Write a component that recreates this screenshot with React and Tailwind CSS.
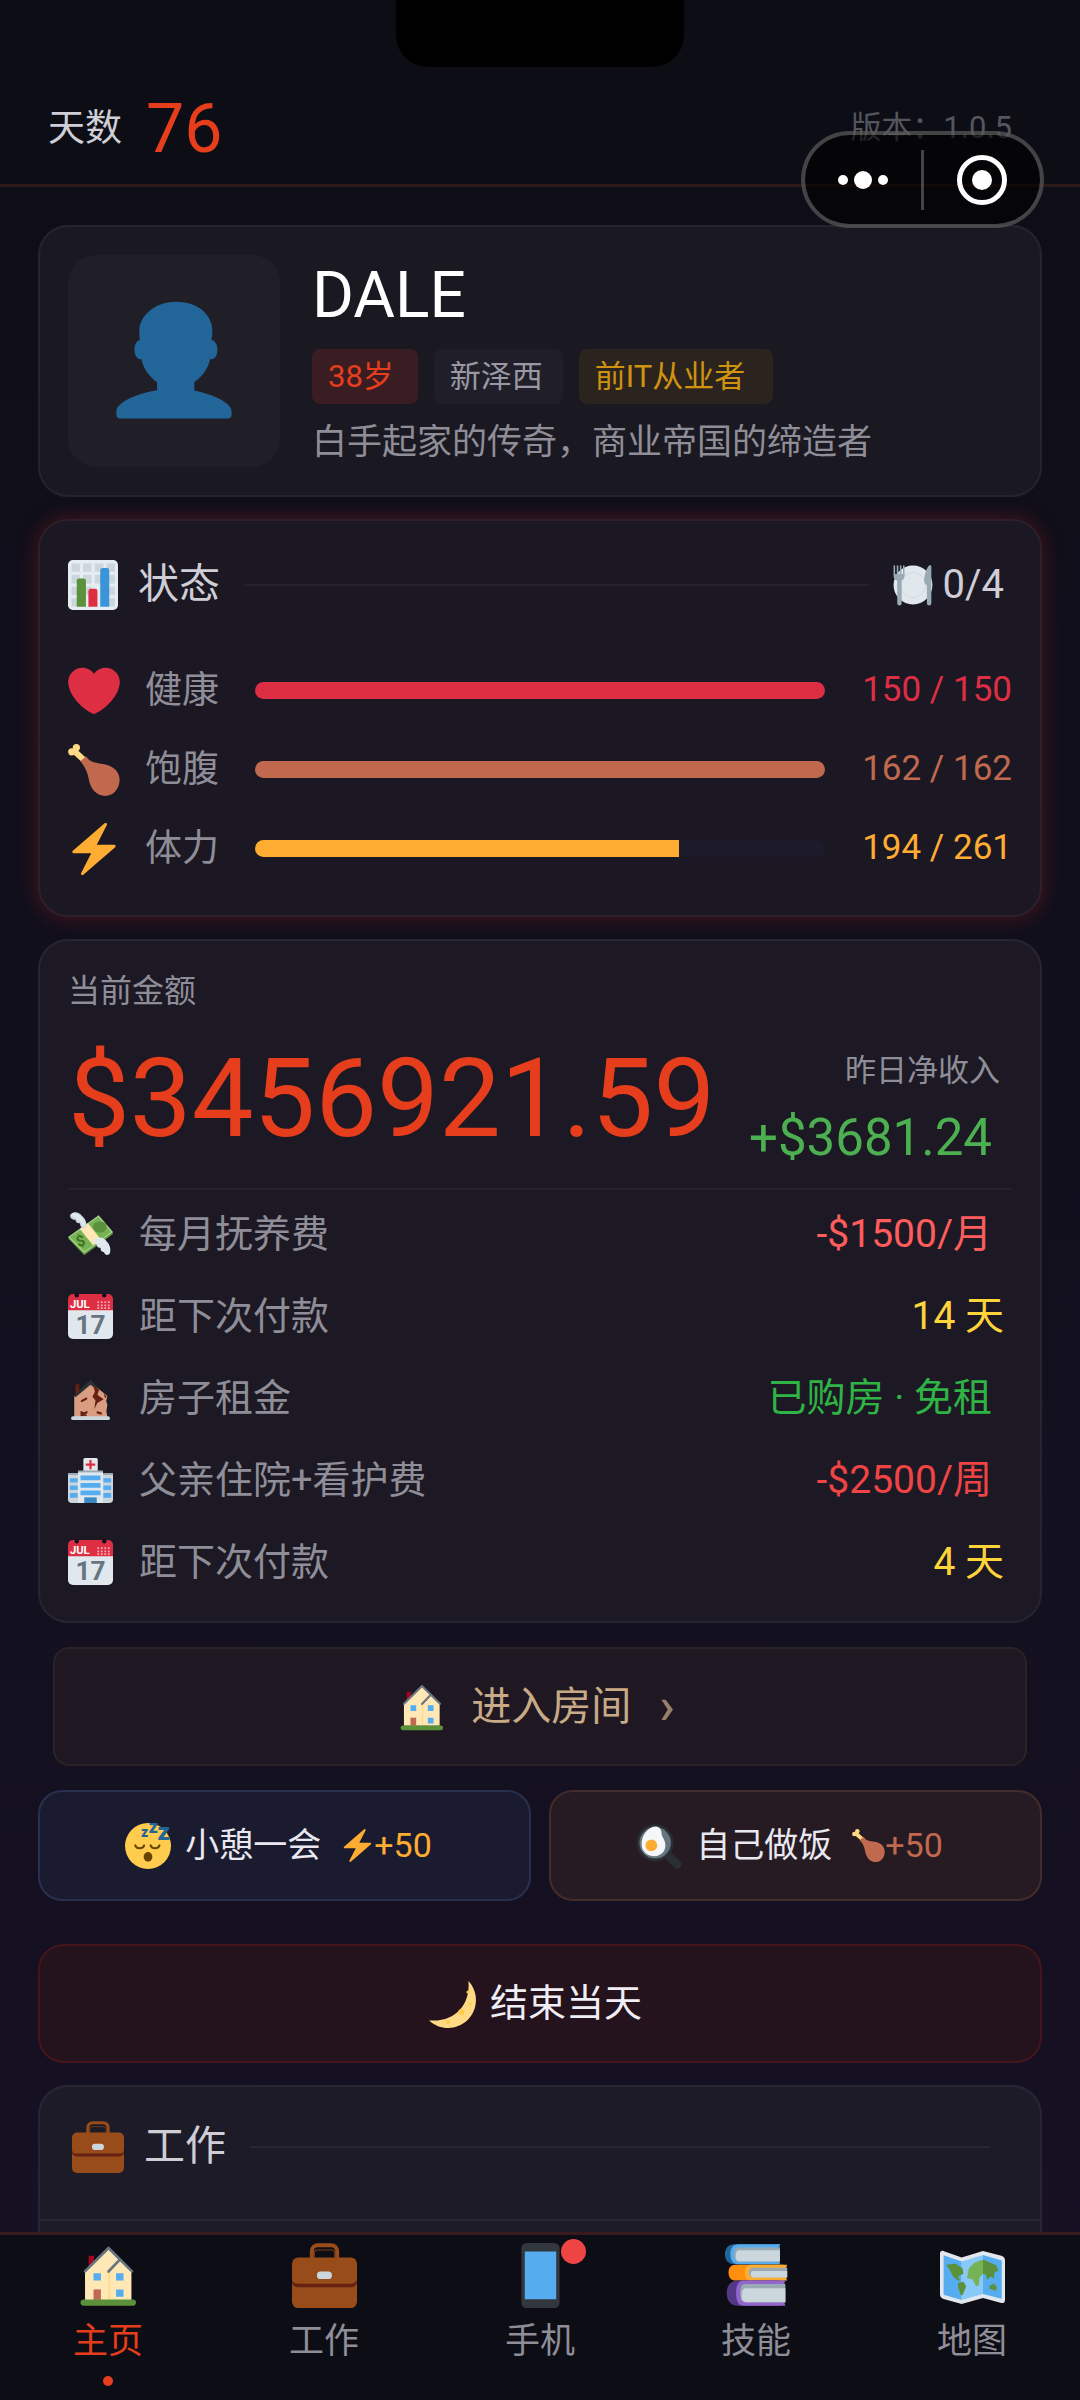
import React, { useState } from 'react';

/* ---------- Emoji icons ---------- */

const Svg = ({ className, children }) => (
  <svg viewBox="0 0 36 36" className={`shrink-0 overflow-visible ${className}`} aria-hidden="true">
    {children}
  </svg>
);

const BustIcon = ({ className }) => (
  <Svg className={className}>
    <path fill="#226699" d="M24 26.799v-2.566c2-1.348 4.08-3.779 4.703-6.896.186.103.206.17.413.17.991 0 1.709-1.287 1.709-2.873 0-1.562-.823-2.827-1.794-2.865.187-.674.293-1.577.293-2.735C29.324 5.168 26 .527 18.541.527c-6.629 0-10.777 4.641-10.777 8.507 0 1.123.069 2.043.188 2.755-.911.137-1.629 1.352-1.629 2.845 0 1.587.804 2.873 1.796 2.873.206 0 .025-.067.209-.17C8.952 20.453 11 22.885 13 24.232v2.414c-5 .645-12 3.437-12 6.23v1.061C1 35 2.076 35 3.137 35h29.725C33.924 35 35 35 35 33.938v-1.061c0-2.615-6-5.225-11-6.078z" />
  </Svg>
);

const ChartIcon = ({ className }) => (
  <Svg className={className}>
    <rect width="36" height="36" rx="3.5" fill="#e6edf1" />
    <path fill="#ccd6dd" d="M2.5 2.5h6v6h-6zM10.8 2.5H17v6h-6.2zM19.3 2.5h6.2v6h-6.2zM27.8 2.5h6v6h-6zM2.5 10.800h6V17h-6zM10.800 10.800H17V17h-6.200zM19.300 10.800h6.200V17h-6.200zM27.800 10.800h6V17h-6zM2.500 19.200h6v6h-6zM10.800 19.200H17v6h-6.200zM27.800 19.200h6v6h-6zM2.500 27.500h6v6h-6zM27.800 27.500h6v6h-6z" />
    <path fill="#5c913b" d="M6.300 33.700V15a1.700 1.700 0 0 1 1.700-1.700h3.200a1.700 1.700 0 0 1 1.700 1.700v18.700z" />
    <path fill="#dd2e44" d="M14.700 33.700V22.400a1.700 1.700 0 0 1 1.700-1.700h3.100a1.700 1.700 0 0 1 1.700 1.700v11.300z" />
    <path fill="#3b94d9" d="M23.200 33.700V7.500a1.700 1.700 0 0 1 1.700-1.700H28a1.700 1.700 0 0 1 1.700 1.700v26.200z" />
  </Svg>
);

const PlateIcon = ({ className }) => (
  <Svg className={className}>
    <circle cx="18" cy="18" r="17.500" fill="#e1e8ed" />
    <circle cx="18" cy="18" r="11.500" fill="#ccd6dd" />
    <circle cx="18" cy="18" r="10.800" fill="#e1e8ed" />
    <path fill="#99aab5" d="M.500 1a.7.7 0 0 1 1.400 0v7h1.500V1a.7.7 0 0 1 1.400 0v7h1.400V1a.7.7 0 0 1 1.400 0v7h1.400V1a.7.7 0 0 1 1.400 0v9c0 2.500-1.500 3.500-2.600 4v20.500a1.600 1.600 0 0 1-4 0V14C2.200 13.500.500 12.500.500 10z" />
    <path fill="#99aab5" d="M34.500 1.500c0-2-2-1.500-3 0-2.500 4-3.500 9-3.500 12.500 0 2.500 1.200 3.500 2.500 4v16.500a2 2 0 0 0 4 0z" />
  </Svg>
);

const HeartIcon = ({ className }) => (
  <Svg className={className}>
    <path fill="#dd2e44" d="M35.885 11.833c0-5.450-4.418-9.868-9.867-9.868-3.308 0-6.227 1.633-8.018 4.129-1.791-2.496-4.710-4.129-8.017-4.129-5.450 0-9.868 4.417-9.868 9.868 0 .772.098 1.520.266 2.241C1.751 22.587 11.216 31.568 18 34.034c6.783-2.466 16.249-11.447 17.617-19.959.170-.721.268-1.469.268-2.242z" />
  </Svg>
);

const DrumstickIcon = ({ className }) => (
  <Svg className={className}>
    <path stroke="#ffd983" strokeWidth="4.200" strokeLinecap="round" d="M5 5.500l6 5.500" />
    <circle cx="5.800" cy="2.500" r="2.500" fill="#ffd983" />
    <circle cx="2.600" cy="5.400" r="2.500" fill="#ffd983" />
    <path fill="#c1694f" d="M12.500 8.500C15.500 13 19 13 25 14c6.500 1 11 5.500 10.700 11.500C35.400 31.500 31 36 25.800 36 20 36 15.800 31.500 14.500 25c-1-5.500-2.500-9-6-13z" />
  </Svg>
);

const BoltIcon = ({ className }) => (
  <Svg className={className}>
    <path fill="#ffac33" d="M32.938 15.651C32.792 15.260 32.418 15 32 15H19.925L26.890 1.458c.219-.426.106-.947-.271-1.243C26.437.071 26.218 0 26 0c-.233 0-.466.082-.653.243L18 6.588 3.347 19.243c-.316.273-.430.714-.284 1.105S3.582 21 4 21h12.075L9.110 34.542c-.219.426-.106.947.271 1.243.182.144.401.215.619.215.233 0 .466-.082.653-.243L18 29.412l14.653-12.655c.317-.273.430-.714.285-1.106z" />
  </Svg>
);

const MoneyIcon = ({ className }) => (
  <Svg className={className}>
    <path fill="#5c913b" d="M0 21L13 34.500 36 17.500 35.500 16z" />
    <path fill="#a7d28b" d="M0 20L24.500 2.500 36 16 13 33z" />
    <path fill="#77b255" d="M1.500 20L24.200 4l10.300 12L13.200 31.500z" />
    <ellipse cx="25.500" cy="12" rx="5.500" ry="4.500" fill="#5c913b" />
    <path fill="#ffe8b6" d="M9.500 13.500l6.500-4.500 10 12.500-6 5z" />
    <text x="7" y="27" fontSize="12" fontWeight="700" fill="#3e721d" transform="rotate(-20 11 24)">$</text>
    <path fill="#ccd6dd" d="M1.700 2.500C4-1 9 0 11 3c2.500 2 4 5 4 8.500l-3.500 1.500C10 12 9.800 10.500 9.500 9 7.500 9.500 6 8 6 6.200 4 6.500 1.500 5 1.700 2.500z" />
    <path fill="#e1e8ed" d="M2.500 1.800C4-.5 8 .5 10 3.200c2.500 2 4 4.500 4 7.300l-2.200 1C11 9.500 10.500 8 8.800 7 7 7 6.500 6 6.200 4.800 4.500 4.800 2.800 3.800 2.500 1.800z" />
    <path fill="#e1e8ed" d="M21 22c3-3 8-1.500 10 1.500 2.500 2.500 3.500 6 2.500 9.500-1.500 2.500-4.500 1-4.800-1-1.800 0-2.700-1.500-2.700-3.500-2 .5-3-1-3-2.500C21.500 25.500 20.500 24 21 22z" />
  </Svg>
);

const CalendarIcon = ({ className }) => (
  <Svg className={className}>
    <path fill="#e1e8ed" d="M0 10h36v22a4 4 0 0 1-4 4H4a4 4 0 0 1-4-4z" />
    <path fill="#dd2e44" d="M36 13H0V4a4 4 0 0 1 4-4h28a4 4 0 0 1 4 4z" />
    <circle cx="7" cy="1" r="1.800" fill="#13111c" />
    <circle cx="29" cy="1" r="1.800" fill="#13111c" />
    <text x="1.500" y="11" fontSize="9" fontWeight="700" fill="#fff">JUL</text>
    <path stroke="#f4abb4" strokeWidth="1.400" strokeDasharray="1.400 1.400" d="M23.500 6.500h11M23.500 9h11M23.500 11.300h11" />
    <text x="18" y="32" fontSize="21" fontWeight="700" textAnchor="middle" fill="#66757f">17</text>
  </Svg>
);

const DerelictIcon = ({ className }) => (
  <Svg className={className}>
    <path fill="#d99e82" d="M5 33V16L18 5l13.500 11-1 4 1 3-.800 5 .800 5z" />
    <path fill="#292f33" d="M18 3l6 6-1.500 1.500L18 7l-12 10-1.500-1.500z" />
    <path fill="#662113" d="M6 7l3-1v6l-3 3zM20 7l5 4-1.500 4 5 3.500-5 3-2.500 5 1-7-2.500-3 2-4zM11 19l4-2 .5 1.500-4.500 2.500-1-.800zM10 28l3 1 2.500-1.200v2L14 30.500l1.500 1.700-2.700-.4-2.800.7v-2zM23 28l4 1.200V31l-4-1zM28.500 14l2.500 2.500-1.500 1z" />
    <rect x="2.500" y="32.200" width="31" height="3" rx="1.500" fill="#ccd6dd" />
  </Svg>
);

const HospitalIcon = ({ className }) => (
  <Svg className={className}>
    <rect x="12.300" width="11.500" height="11" rx="1.200" fill="#e1e8ed" />
    <path stroke="#dd2e44" strokeWidth="1.800" d="M18 1.500v7.500M14.200 5.200h7.600" />
    <path fill="#ccd6dd" d="M0 13h36v20a3 3 0 0 1-3 3H3a3 3 0 0 1-3-3z" />
    <path fill="#99aab5" d="M0 12h9v1.500H0zM27 12h9v1.500h-9zM8 10h20v2H8z" />
    <path fill="#e1e8ed" d="M8 11.500h20V36H8z" />
    <path fill="#55acee" d="M10 14h16v3.700H10zM10 20h16v3.700H10zM10 26h16v3.700H10zM1.500 16.200h6.200v3.300H1.500zM1.500 22h6.200v3.500H1.500zM1.500 28h6.200v3.700H1.500zM28.300 16.200h6.200v3.300h-6.200zM28.300 22h6.200v3.500h-6.200zM28.300 28h6.200v3.700h-6.200z" />
    <path fill="#3b88c3" d="M13 31.500h10V36H13z" />
  </Svg>
);

const HouseIcon = ({ className }) => (
  <Svg className={className}>
    <path fill="#a0041e" d="M7 7h3v5L7 15z" />
    <path fill="#ffe8b6" d="M5 15.500L18 3l12.700 12.500v16H5z" />
    <path fill="#ffd983" d="M18 15.500h.8v16H18z" />
    <path fill="none" stroke="#66757f" strokeWidth="1.500" strokeLinecap="round" strokeLinejoin="round" d="M5 15.700L18 2.800l13 12.900M24 9.500l-6 6.300" />
    <path fill="#55acee" d="M9.700 16.700h4.100v4.100H9.700zM22.200 16.700h4.100v4.100h-4.100zM22.200 25.700h4.100v4.100h-4.100z" />
    <path fill="#c1694f" d="M9.700 25.700h4.100v5.800H9.700z" />
    <rect x="2.500" y="31.300" width="30.700" height="3.400" rx="1.700" fill="#5c913b" />
  </Svg>
);

const SleepIcon = ({ className }) => (
  <Svg className={className}>
    <circle cx="18" cy="18" r="18" fill="#ffcc4d" />
    <path fill="none" stroke="#664500" strokeWidth="1.600" strokeLinecap="round" d="M8 17.500c1 3 6 3 7 0M20 17.500c1 3 6 3 7 0" />
    <ellipse cx="18" cy="26.500" rx="3.400" ry="3.800" fill="#664500" />
    <g fill="#226699" fontWeight="900">
      <text x="12.500" y="11" fontSize="11">z</text>
      <text x="18.500" y="8" fontSize="14">z</text>
      <text x="25.500" y="13" fontSize="19">z</text>
    </g>
  </Svg>
);

const PanIcon = ({ className }) => (
  <Svg className={className}>
    <path stroke="#292f33" strokeWidth="6.500" strokeLinecap="round" d="M25 25l7.500 7.500" />
    <circle cx="15" cy="15.500" r="14.500" fill="#292f33" />
    <circle cx="15" cy="15.500" r="12.300" fill="#66757f" />
    <path fill="#f5f8fa" d="M12 3.500c4-2 8 0 8 4.500 0 3 3 5 3 9.500 0 5-3.500 8.500-8.500 8.500S5 23 4.500 18C4 12 6.500 6.500 12 3.500z" />
    <circle cx="12" cy="17.500" r="4.600" fill="#ffac33" />
  </Svg>
);

const MoonIcon = ({ className }) => (
  <Svg className={className}>
    <path fill="#ffd983" d="M30.312.776C32 19 20 32 .776 30.312c8.199 7.717 21.091 7.588 29.107-.429C37.900 21.867 38.030 8.975 30.312.776z" />
    <circle cx="30" cy="9" r="1.200" fill="#ffcc4d" />
    <circle cx="25" cy="24" r="2.300" fill="#ffcc4d" />
    <circle cx="15" cy="31.500" r="1.500" fill="#ffcc4d" />
    <circle cx="31.500" cy="18" r="1.200" fill="#ffcc4d" />
  </Svg>
);

const BriefcaseIcon = ({ className }) => (
  <Svg className={className}>
    <path fill="none" stroke="#974c1a" strokeWidth="2.200" d="M11 9V4.500A3.300 3.300 0 0 1 14.300 1.200h7.400A3.300 3.300 0 0 1 25 4.500V9" />
    <path fill="none" stroke="#7a3a14" strokeWidth=".6" d="M12.400 8V5.500a1.600 1.600 0 0 1 1.600-1.600h8a1.600 1.600 0 0 1 1.600 1.600V8" />
    <rect y="8" width="36" height="28" rx="3.500" fill="#974c1a" />
    <path fill="#662113" d="M0 20c.3 2 1.500 2.500 3.500 2.500h29c2 0 3.200-.5 3.500-2.500v1.500c0 2-1.500 3-3.500 3h-29c-2 0-3.500-1-3.500-3z" />
    <rect x="13.800" y="15.800" width="8.300" height="4.200" rx="2" fill="#ccd6dd" />
  </Svg>
);

const PhoneIcon = ({ className }) => (
  <Svg className={className}>
    <rect x="7.400" width="21.200" height="36" rx="3" fill="#31373d" />
    <path fill="#55acee" d="M9.300 4.700h17.400v26.500H9.300z" />
  </Svg>
);

const BooksIcon = ({ className }) => (
  <Svg className={className}>
    <path fill="#226699" d="M31 .700H5.500C2.500.700.500 3 .500 6.200s2 5.500 5 5.500H31z" />
    <path fill="#55acee" d="M31.300.700H8C5 .700 3.500 3 3.500 6.200s1.500 5.500 4.500 5.500h23.300l-1-1.200V2z" />
    <path fill="#99aab5" d="M31 2.500H8C6 2.500 5.500 4 5.500 6.200s.5 4 2.500 4h23z" />
    <path fill="#ccd6dd" d="M31 4H9C7 4 6.500 5 6.500 7s.5 3.200 2.500 3.200h22z" />
    <path fill="#ff8f0c" d="M33 12H6.500C4 12 2.500 13.500 2.500 16.300s1.500 4.500 4 4.500H33z" />
    <path fill="#ffac33" d="M35 12H15c-2.500 0-3.500 1.500-3.500 4.300s1 4.500 3.500 4.500h20l-.5-1.300v-6z" />
    <path fill="#99aab5" d="M35 13.700H16c-1.500 0-2.200 1-2.200 2.600S14.500 19 16 19h19z" />
    <path fill="#ccd6dd" d="M35 15.500H16.500c-1.200 0-1.700.5-1.700 1.700s.5 1.900 1.700 1.900H35z" />
    <path fill="#553788" d="M31 20.800H8c-4 0-6.500 2.500-6.500 7s2.500 6.900 6.500 6.900h23z" />
    <path fill="#9266cc" d="M34 20.800H11c-3 0-4.300 2.500-4.300 7s1.300 6.900 4.300 6.900h23l-.5-1.500V22z" />
    <path fill="#99aab5" d="M34 22.700H12c-2.500 0-3 2-3 5s.5 5.100 3 5.100h22z" />
    <path fill="#ccd6dd" d="M34 25H12.500c-2 0-2.700 1.200-2.700 4s.7 3.800 2.700 3.800H34z" />
  </Svg>
);

const MapIcon = ({ className }) => (
  <Svg className={className}>
    <path fill="#e1e8ed" d="M0 6c0-1.500 1-2 2.200-1.500L12 8l11.800-3.600L34 7c1.300.4 2 1.200 2 2.500v22c0 1.300-.8 2-2 1.700L23.800 30.500 12 33.800 2 31c-1.300-.4-2-1.200-2-2.500z" />
    <path fill="#55acee" d="M2 6.800l10 3.400v21.300L2 28.700zM23.800 6.700l10.400 3v21.200l-10.400-2.600z" />
    <path fill="#88c9f9" d="M12 10.200l11.800-3.500v21.600L12 31.500z" />
    <path fill="#5c913b" d="M3.500 12l5-.5 4 2.500.5 3-3 1.500 1 2-.800.500-3-2.500-2-4zM23.800 9.200l7.500 3.300 1 3-2 .5-.5 3.500-2-1-1.500 2-1-3-1.500-.500zM10 22l3-.500 1.500 2.500-2 5-1-.200-1.500-4zM27.500 23.500l2.500-1 1.500 2-.5 2-3.500-1z" />
    <path fill="#77b255" d="M16 14l3-3 4.800-1.800V17L22 19l-.5 4.500-1.500.500-2-4-3-.500.500-3z" />
  </Svg>
);

/* ---------- Data ---------- */

const stats = [
  { label: '健康', Icon: HeartIcon, value: 150, max: 150, bar: 'bg-[#dd2e44]', text: 'text-[#dd2e44]' },
  { label: '饱腹', Icon: DrumstickIcon, value: 162, max: 162, bar: 'bg-[#c1694f]', text: 'text-[#c1694f]' },
  { label: '体力', Icon: BoltIcon, value: 194, max: 261, bar: 'bg-[#ffac33]', text: 'text-[#ffac33]' },
];

const bills = [
  { label: '每月抚养费', Icon: MoneyIcon, value: '-$1500/月', style: 'text-[#ff5c5c] pr-5' },
  { label: '距下次付款', Icon: CalendarIcon, value: '14 天', style: 'text-[#ffd43b] pr-2' },
  { label: '房子租金', Icon: DerelictIcon, value: '已购房 · 免租', style: 'text-[#2fb344] pr-5' },
  { label: '父亲住院+看护费', Icon: HospitalIcon, value: '-$2500/周', style: 'text-[#ef4444] pr-5' },
  { label: '距下次付款', Icon: CalendarIcon, value: '4 天', style: 'text-[#ffd43b] pr-2' },
];

const tabs = [
  { key: 'home', label: '主页', Icon: HouseIcon },
  { key: 'work', label: '工作', Icon: BriefcaseIcon },
  { key: 'phone', label: '手机', Icon: PhoneIcon, badge: true },
  { key: 'skill', label: '技能', Icon: BooksIcon },
  { key: 'map', label: '地图', Icon: MapIcon },
];

/* ---------- Sections ---------- */

const Header = () => (
  <header className="relative border-b-3 border-[#2c1917] bg-[#0d0e15]">
    <div className="mx-auto h-[67px] w-[288px] rounded-b-[32px] bg-black"></div>
    <div className="flex h-[117px] items-center justify-between px-12 pt-1.5">
      <div className="flex items-center gap-6">
        <span className="text-[37px] text-[#cfced6]">天数</span>
        <span className="text-[68px] leading-none text-[#e63e1c]">76</span>
      </div>
      <span className="pr-5 text-[31px] text-[#55555d]">版本：1.0.5</span>
    </div>

    {/* Mini program capsule */}
    <div className="absolute right-9 top-[131px] z-10 flex h-[97px] w-[243px] items-center rounded-full border-4 border-white/25 bg-black/60">
      <button type="button" aria-label="更多" className="flex h-full flex-1 items-center justify-center gap-1.5">
        <span className="size-2.5 rounded-full bg-white"></span>
        <span className="size-[18px] rounded-full bg-white"></span>
        <span className="size-2.5 rounded-full bg-white"></span>
      </button>
      <span className="h-15 w-[3px] bg-white/25"></span>
      <button type="button" aria-label="关闭" className="flex h-full flex-1 items-center justify-center">
        <span className="flex size-[50px] items-center justify-center rounded-full border-[5px] border-white">
          <span className="size-5 rounded-full bg-white"></span>
        </span>
      </button>
    </div>
  </header>
);

const ProfileCard = () => (
  <section className="flex gap-8 rounded-[30px] border-2 border-white/5 bg-[#1a1821] px-7 pb-[27px] pt-7">
    <div className="flex size-[212px] shrink-0 items-center justify-center rounded-[28px] bg-[#201f28]">
      <BustIcon className="size-[122px]" />
    </div>
    <div className="flex min-w-0 flex-col pt-2">
      <h1 className="text-[64px] leading-[66px] text-white">DALE</h1>
      <div className="mt-5 flex gap-4 text-[31px] leading-[55px]">
        <span className="rounded-lg bg-[#3a1d22] pl-4 pr-6 text-[#e63e1c]">38岁</span>
        <span className="rounded-lg bg-[#201f29] pl-4 pr-5 text-[#9a99a3]">新泽西</span>
        <span className="rounded-lg bg-[#2b231e] pl-4 pr-7 text-[#cf9310]">前IT从业者</span>
      </div>
      <p className="mt-3.5 text-[35px] leading-[50px] text-[#8f8e98]">白手起家的传奇，商业帝国的缔造者</p>
    </div>
  </section>
);

const StatusCard = () => (
  <section className="rounded-[30px] border-2 border-[#2d202a] bg-[#1b1823] px-7 pb-[27px] pt-[34px] shadow-[0_0_20px_1px_rgba(170,35,35,0.35)]">
    <div className="flex h-15 items-center">
      <ChartIcon className="size-[50px]" />
      <h2 className="ml-5 text-[41px] text-[#cfced6]">状态</h2>
      <span className="mx-6 h-0.5 flex-1 bg-[#24222d]"></span>
      <PlateIcon className="size-10" />
      <span className="ml-2.5 pr-2 text-[40px] text-[#cfced6]">0/4</span>
    </div>
    <div className="mt-9">
      {stats.map(({ label, Icon, value, max, bar, text }) => (
        <div key={label} className="flex h-[79px] items-center">
          <Icon className="size-13" />
          <span className="ml-[25px] text-[37px] text-[#8f8e98]">{label}</span>
          <div
            role="progressbar"
            aria-label={label}
            aria-valuenow={value}
            aria-valuemax={max}
            className="ml-9 h-[17px] flex-1 overflow-hidden rounded-full bg-[#1d1a2c]"
          >
            <div className={`h-full ${bar}`} style={{ width: `${(value / max) * 100}%` }}></div>
          </div>
          <span className={`w-[187px] text-right text-[35px] ${text}`}>{value} / {max}</span>
        </div>
      ))}
    </div>
  </section>
);

const MoneyCard = () => (
  <section className="rounded-[30px] border-2 border-white/5 bg-[#1c1925] px-7 pb-[18px] pt-8">
    <p className="text-[32px] leading-9 text-[#8f8e98]">当前金额</p>
    <div className="flex h-[181px] items-center justify-between border-b-2 border-[#24222d]">
      <span className="text-[110px] leading-none text-[#e63e1c]">$3456921.59</span>
      <div className="flex flex-col items-end pt-5">
        <span className="pr-3 text-[31px] leading-[58px] text-[#8f8e98]">昨日净收入</span>
        <span className="pr-5 text-[51px] leading-[76px] text-[#4caf50]">+$3681.24</span>
      </div>
    </div>
    <ul className="pt-[3px]">
      {bills.map(({ label, Icon, value, style }, i) => (
        <li key={i} className="flex h-[82px] items-center">
          <Icon className="size-[45px]" />
          <span className="ml-[26px] flex-1 text-[38px] text-[#8f8e98]">{label}</span>
          <span className={`text-[39px] ${style}`}>{value}</span>
        </li>
      ))}
    </ul>
  </section>
);

const Actions = () => (
  <>
    <div className="my-0.5 px-[15px]">
      <button type="button" className="flex h-[119px] w-full items-center justify-center rounded-2xl border-2 border-[#2a2226] bg-[#1f1822] pr-2 text-[#c8ab86]">
        <HouseIcon className="size-[50px]" />
        <span className="ml-6 text-[40px]">进入房间</span>
        <span className="ml-7 text-[52px] font-medium leading-none opacity-70">›</span>
      </button>
    </div>

    <div className="grid grid-cols-2 gap-[18px] text-[34px] text-[#e9e8f0]">
      <button type="button" className="flex h-[111px] items-center justify-center rounded-3xl border-2 border-[#29304e] bg-[#1b1b2f] pr-3">
        <SleepIcon className="size-[46px]" />
        <span className="ml-3.5">小憩一会</span>
        <BoltIcon className="ml-5 size-[33px]" />
        <span className="text-[#ffac33]">+50</span>
      </button>
      <button type="button" className="flex h-[111px] items-center justify-center rounded-3xl border-2 border-[#442c2a] bg-[#261b22] pr-3">
        <PanIcon className="size-[46px]" />
        <span className="ml-3.5">自己做饭</span>
        <DrumstickIcon className="ml-5 size-[33px]" />
        <span className="text-[#c1694f]">+50</span>
      </button>
    </div>

    <button type="button" className="mt-[21px] flex h-[119px] items-center justify-center gap-3.5 rounded-[26px] border-2 border-[#46151c] bg-[#24121c] pr-2.5 text-[38px] text-[#f0eef5]">
      <MoonIcon className="size-12" />
      <span>结束当天</span>
    </button>
  </>
);

const WorkCard = () => (
  <section className="rounded-t-[30px] border-2 border-b-0 border-white/5 bg-[#1e1b29]">
    <div className="flex h-[134px] items-center border-b-2 border-white/5 pb-3 pl-8 pr-[50px]">
      <BriefcaseIcon className="size-[52px]" />
      <h2 className="ml-5 text-[41px] text-[#cfced6]">工作</h2>
      <span className="ml-6 h-0.5 flex-1 bg-[#282534]"></span>
    </div>
    <div className="h-80"></div>
  </section>
);

const TabBar = ({ active, onChange }) => (
  <nav className="relative z-10 grid shrink-0 grid-cols-5 border-t-3 border-[#391b1f] bg-[#0d0d15] pb-3.5 pt-2">
    {tabs.map(({ key, label, Icon, badge }) => (
      <button key={key} type="button" onClick={() => onChange(key)} className="flex flex-col items-center">
        <span className="relative">
          <Icon className="size-[65px]" />
          {badge && <span className="absolute -right-[13px] -top-1 size-[25px] rounded-full bg-[#ef4444]"></span>}
        </span>
        <span className={`mt-3.5 text-[35px] leading-10 ${active === key ? 'text-[#e63e1c]' : 'text-[#8f8e98]'}`}>{label}</span>
        <span className={`mt-3.5 size-2.5 rounded-full ${active === key ? 'bg-[#e63e1c]' : ''}`}></span>
      </button>
    ))}
  </nav>
);

const App = () => {
  const [tab, setTab] = useState('home');

  return (
    <div
      lang="zh-CN"
      className="flex h-screen flex-col bg-linear-to-b from-[#0e0e17] to-[#161124] font-[family-name:Roboto,'Noto_Sans_CJK_SC',sans-serif]"
    >
      <Header />
      <main className="flex min-h-0 flex-1 flex-col gap-[22px] overflow-y-auto px-[38px] pt-[38px] [scrollbar-width:none] *:shrink-0">
        <ProfileCard />
        <StatusCard />
        <MoneyCard />
        <Actions />
        <WorkCard />
      </main>
      <TabBar active={tab} onChange={setTab} />
    </div>
  );
};

export default App;
